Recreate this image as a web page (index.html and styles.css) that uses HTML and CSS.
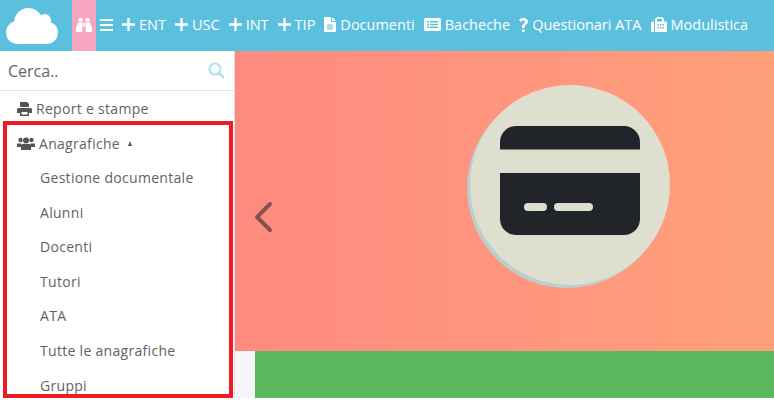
FILE: index.html
```html
<!DOCTYPE html>
<html lang="en">
  <head>
    <meta charset="UTF-8">
    <title>Anagrafiche</title>
    <link rel="stylesheet" href="styles.css">
  </head>
  <body>
    <nav class="topbar">
      <a class="logo" href="#">
        <svg width="52" height="36" viewBox="0 0 52 36"><path fill="#fff" d="M12 36C5 36 0 31 0 24.500C0 19 3.500 15 8 13.500C9 5.500 15 0 22.500 0C28 0 32.500 3 35 7.500C37 6 40 5.500 42 7C44.500 8.500 45.500 11.500 45 14.500C49.500 16 52 20 52 24.500C52 31 47 36 40.500 36Z"/></svg>
      </a>
      <a class="finder" href="#">
        <svg width="16" height="14" viewBox="0 0 16 14"><path fill="#fff" d="M2.500 1.500C3 .5 3.500 0 4.500 0H6.500V3.500H2.300zM9.500 0h2C12.500 0 13 .5 13.500 1.500L13.700 3.500H9.500zM2.300 4.500h4.200V13c0 .5-.5 1-1 1H1c-.5 0-1-.5-1-1V9.500zM9.500 4.500h4.200L16 9.500V13c0 .5-.5 1-1 1H10.500c-.5 0-1-.5-1-1zM7.300 4.500h1.400V9H7.300z"/></svg>
      </a>
      <a class="nav-item bars" href="#">
        <svg width="13" height="12" viewBox="0 0 13 12"><path fill="#fff" d="M0 0h13v2H0zM0 5h13v2H0zM0 10h13v2H0z"/></svg>
      </a>
      <a class="nav-item" href="#"><svg width="13" height="13" viewBox="0 0 13 13"><path fill="#fff" d="M5.300 0h2.400v5.300H13v2.400H7.700V13H5.300V7.700H0V5.300h5.300z"/></svg>ENT</a>
      <a class="nav-item" href="#"><svg width="13" height="13" viewBox="0 0 13 13"><path fill="#fff" d="M5.300 0h2.400v5.300H13v2.400H7.700V13H5.300V7.700H0V5.300h5.300z"/></svg>USC</a>
      <a class="nav-item" href="#"><svg width="13" height="13" viewBox="0 0 13 13"><path fill="#fff" d="M5.300 0h2.400v5.300H13v2.400H7.700V13H5.300V7.700H0V5.300h5.300z"/></svg>INT</a>
      <a class="nav-item" href="#"><svg width="13" height="13" viewBox="0 0 13 13"><path fill="#fff" d="M5.300 0h2.400v5.300H13v2.400H7.700V13H5.300V7.700H0V5.300h5.300z"/></svg>TIP</a>
      <a class="nav-item" href="#"><svg width="12" height="15" viewBox="0 0 12 15"><path fill="#fff" fill-rule="evenodd" d="M1 0h6v5h5v9a1 1 0 0 1-1 1H1a1 1 0 0 1-1-1V1a1 1 0 0 1 1-1zM8 0l4 4H8zM3 7.500v1h6v-1zM3 9.500v1h6v-1zM3 11.500v1h6v-1z"/></svg>Documenti</a>
      <a class="nav-item" href="#"><svg width="17" height="13" viewBox="0 0 17 13"><path fill="#fff" fill-rule="evenodd" d="M1.500 0h14A1.500 1.500 0 0 1 17 1.500v10a1.500 1.500 0 0 1-1.500 1.500h-14A1.500 1.500 0 0 1 0 11.500v-10A1.500 1.500 0 0 1 1.500 0zM3 3v1.500h2V3zM6 3v1.500h8V3zM3 5.800v1.500h2V5.800zM6 5.800v1.500h8V5.800zM3 8.600v1.500h2V8.600zM6 8.600v1.500h8V8.600z"/></svg>Bacheche</a>
      <a class="nav-item" href="#"><svg width="9" height="14" viewBox="0 0 9 14"><path fill="#fff" d="M3 14v-2.500h2.700V14zM3 10V8c0-1.500 3-2.500 3-4 0-1-.8-1.500-1.700-1.500-1 0-1.800.5-2.600 1.500L0 2.200C1 .8 2.500 0 4.500 0 7 0 9 1.400 9 3.800c0 2.500-3.300 3.200-3.300 4.700V10z"/></svg>Questionari ATA</a>
      <a class="nav-item" href="#"><svg width="16" height="15" viewBox="0 0 16 15"><path fill="#fff" fill-rule="evenodd" d="M0 6A1.500 1.500 0 0 1 1.500 4.500H3V15H1.500A1.500 1.500 0 0 1 0 13.500zM4 5V3C4 1 5.500 0 7.500 0h2C11.500 0 13 1 13 3V4.500h1.500A1.500 1.500 0 0 1 16 6V15H4zM6 2.800V4.500h5V2.800C11 2 10.500 1.800 9.500 1.800h-2C6.500 1.800 6 2 6 2.800zM6.500 7v1.500H8V7zM9 7v1.500h1.500V7zM11.500 7v1.500H13V7zM6.500 10v1.500H8V10zM9 10v1.500h1.500V10zM11.500 10v1.500H13V10z"/></svg>Modulistica</a>
    </nav>

    <div class="page">
      <aside class="sidebar">
        <div class="search">
          <span class="search-text">Cerca..</span>
          <svg width="17" height="17" viewBox="0 0 17 17"><circle cx="7" cy="7" r="5.500" fill="none" stroke="#b3e2f1" stroke-width="2.200"/><path d="M11 11l5 5" stroke="#b3e2f1" stroke-width="2.600"/></svg>
        </div>
        <a class="menu-link report" href="#">
          <svg width="15" height="14" viewBox="0 0 15 14"><path fill="#555" fill-rule="evenodd" d="M3 0h7l2 2v3H3zM1.500 6h12A1.500 1.500 0 0 1 15 7.500V11h-3v3H3v-3H0V7.500A1.500 1.500 0 0 1 1.500 6zM4.500 10v2.500h6V10z"/></svg>
          Report e stampe
        </a>
        <section class="highlight">
          <a class="menu-link" href="#">
            <svg width="18" height="13" viewBox="0 0 18 13"><g fill="#555"><circle cx="3.500" cy="3" r="2.200"/><circle cx="14.500" cy="3" r="2.200"/><circle cx="9" cy="3.500" r="3"/><path d="M0 6.500h4.500L4 10H0zM13.500 6.500H18V10h-4zM5.500 7h7c1 0 1.500 1 1.500 2v4H4V9c0-1 .5-2 1.500-2z"/></g></svg>
            Anagrafiche <span class="caret"></span>
          </a>
          <ul class="submenu">
            <li>Gestione documentale</li>
            <li>Alunni</li>
            <li>Docenti</li>
            <li>Tutori</li>
            <li>ATA</li>
            <li>Tutte le anagrafiche</li>
            <li>Gruppi</li>
          </ul>
        </section>
      </aside>

      <main class="content">
        <div class="slide">
          <svg class="prev" width="20" height="32" viewBox="0 0 20 32"><path d="M16 3L3 16l13 13" fill="none" stroke="#212529" stroke-opacity=".55" stroke-width="4" stroke-linecap="round" stroke-linejoin="round"/></svg>
          <div class="circle">
            <svg width="140" height="109" viewBox="0 0 140 109"><path fill="#212529" fill-rule="evenodd" d="M0 23.500V16A16 16 0 0 1 16 0H124A16 16 0 0 1 140 16V23.500zM0 47H140V93A16 16 0 0 1 124 109H16A16 16 0 0 1 0 93zM28 77a4 4 0 0 0 0 8H43a4 4 0 0 0 0-8zM58 77a4 4 0 0 0 0 8H89a4 4 0 0 0 0-8z"/></svg>
          </div>
        </div>
        <div class="band">
          <div class="band-green"></div>
        </div>
      </main>
    </div>
  </body>
</html>
```

FILE: styles.css
```css
html, body {
  margin: 0;
  height: 400px;
  overflow: hidden;
  background-color: #fff;
  font-family: "Open Sans", sans-serif;
}

a {
  color: inherit;
  text-decoration: none;
}

.topbar {
  display: flex;
  align-items: stretch;
  height: 51px;
  background-color: #5bc0de;
  color: #fff;
  font-size: 14.500px;
}

.logo {
  width: 72px;
  display: flex;
  align-items: center;
  padding-left: 6px;
  padding-top: 1px;
  box-sizing: border-box;
}

.finder {
  width: 24px;
  background-color: #f8a5c2;
  display: flex;
  align-items: center;
  justify-content: center;
  padding-bottom: 2px;
  box-sizing: border-box;
}

.nav-item {
  display: flex;
  align-items: center;
  gap: 4px;
  margin-left: 9px;
  padding-bottom: 2px;
  box-sizing: border-box;
  white-space: nowrap;
}

.bars {
  margin-left: 4px;
}

.page {
  display: flex;
  height: 347px;
}

.sidebar {
  width: 234px;
  flex: none;
  border-right: 1px solid #ddd;
  color: #5f6368;
  font-size: 14px;
  letter-spacing: .3px;
}

.search {
  height: 39px;
  border-bottom: 1px solid #e6e6e6;
  display: flex;
  align-items: center;
  justify-content: space-between;
  padding: 0 9px 0 8px;
  font-size: 16px;
  letter-spacing: 0;
  color: #666;
}

.menu-link {
  display: flex;
  align-items: center;
  gap: 4px;
  box-sizing: border-box;
  padding-left: 13px;
}

.report {
  height: 30px;
  padding-top: 5px;
  padding-left: 17px;
}

.highlight {
  margin-left: 3px;
  width: 222px;
  height: 269px;
  border: 4px solid #ed1c24;
  overflow: hidden;
}

.highlight .menu-link {
  height: 36px;
  padding-left: 10px;
}

.caret {
  width: 0;
  height: 0;
  margin-left: 4px;
  border-left: 2.500px solid transparent;
  border-right: 2.500px solid transparent;
  border-bottom: 5px solid #555;
}

.submenu {
  list-style: none;
  margin: 0;
  padding: 0 0 0 33px;
}

.submenu li {
  height: 34.600px;
  line-height: 34.600px;
  white-space: nowrap;
}

.content {
  flex: 1;
  display: flex;
  flex-direction: column;
}

.slide {
  height: 300px;
  background-image: linear-gradient(to right, #ff8a80, #ffa07a);
  position: relative;
  padding: 34px 0 0 235px;
  box-sizing: border-box;
}

.prev {
  position: absolute;
  left: 19px;
  top: 150px;
}

.circle {
  width: 200px;
  height: 200px;
  box-sizing: border-box;
  padding-bottom: 9px;
  border-radius: 50%;
  background-color: #dfdfcf;
  box-shadow: -3px 3px 0 #bccfd0;
  display: flex;
  align-items: center;
  justify-content: center;
}

.band {
  flex: 1;
  background-color: #f5f5fa;
  padding-left: 20px;
  display: flex;
}

.band-green {
  flex: 1;
  background-color: #5cb85c;
}
```
